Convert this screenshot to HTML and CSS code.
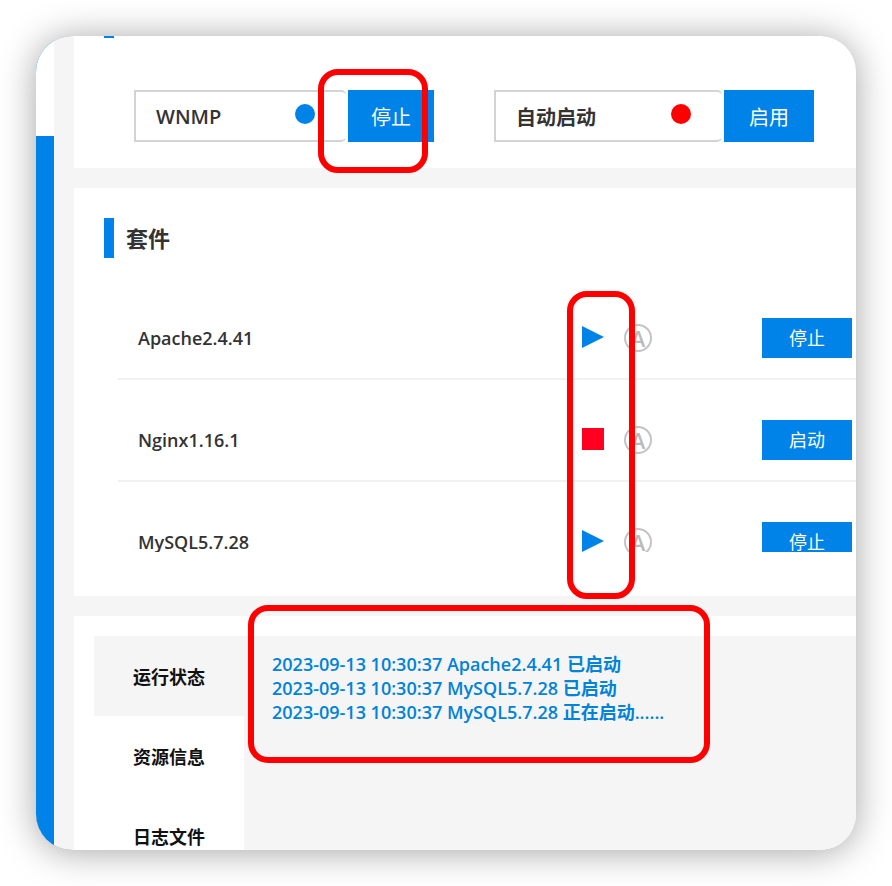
FILE: index.html
```html
<!DOCTYPE html>
<html lang="zh-CN">
<head>
<meta charset="utf-8">
<title>WNMP</title>
<meta name="viewport" content="width=device-width, initial-scale=1">
<link rel="stylesheet" href="styles.css">
</head>
<body>
<div class="window">
  <aside class="rail"></aside>
  <main class="main">
    <section class="panel switches">
      <div class="marker-tail"></div>
      <div class="switch-row">
        <div class="switch">
          <div class="field"><span>WNMP</span><i class="dot on"></i></div>
          <button type="button" class="btn">停止</button>
        </div>
        <div class="switch wide">
          <div class="field"><span>自动启动</span><i class="dot off"></i></div>
          <button type="button" class="btn">启用</button>
        </div>
      </div>
    </section>

    <section class="panel suite">
      <h2 class="heading">套件</h2>
      <div class="list">
        <table class="services">
          <tbody>
            <tr>
              <td class="name">Apache2.4.41</td>
              <td class="state"><div class="icons"><svg class="mark" viewBox="0 0 22 22"><path d="M0 0L22 11L0 22Z" fill="#0083e8"/></svg><span class="auto">A</span></div></td>
              <td class="action"><button type="button" class="btn small">停止</button></td>
            </tr>
            <tr>
              <td class="name">Nginx1.16.1</td>
              <td class="state"><div class="icons"><svg class="mark" viewBox="0 0 22 22"><path d="M0 0H22V22H0Z" fill="#ff0020"/></svg><span class="auto">A</span></div></td>
              <td class="action"><button type="button" class="btn small">启动</button></td>
            </tr>
            <tr>
              <td class="name">MySQL5.7.28</td>
              <td class="state"><div class="icons"><svg class="mark" viewBox="0 0 22 22"><path d="M0 0L22 11L0 22Z" fill="#0083e8"/></svg><span class="auto">A</span></div></td>
              <td class="action"><button type="button" class="btn small">停止</button></td>
            </tr>
          </tbody>
        </table>
      </div>
    </section>

    <section class="panel status">
      <nav class="tabs">
        <button type="button" class="tab active">运行状态</button>
        <button type="button" class="tab">资源信息</button>
        <button type="button" class="tab">日志文件</button>
      </nav>
      <div class="log">
        <p>2023-09-13 10:30:37 Apache2.4.41 已启动</p>
        <p>2023-09-13 10:30:37 MySQL5.7.28 已启动</p>
        <p>2023-09-13 10:30:37 MySQL5.7.28 正在启动......</p>
      </div>
    </section>
  </main>
  <div class="callout callout-stop"></div>
  <div class="callout callout-state"></div>
  <div class="callout callout-log"></div>
</div>
</body>
</html>
```
FILE: styles.css
```css
* { box-sizing: border-box; }

body {
  margin: 0;
  padding: 36px;
  height: 100vh;
  background: #fff;
  color: #333;
  font-family: "Open Sans", "Noto Sans CJK SC", sans-serif;
  font-size: 18px;
  font-weight: 600;
}

button {
  border: 0;
  padding: 0;
  font: inherit;
}

.window {
  position: relative;
  display: flex;
  gap: 20px;
  height: 100%;
  overflow: hidden;
  border-radius: 36px;
  background: #f5f5f5;
}

body::before {
  content: "";
  position: absolute;
  inset: 36px;
  border-radius: 36px;
  background: #999;
  box-shadow: 0 2px 36px rgba(0, 0, 0, 0.36);
}

.rail {
  flex: 0 0 18px;
  background: #0083e8;
  border-top: 100px solid #fff;
}

.main {
  flex: 1;
  min-width: 0;
  display: flex;
  flex-direction: column;
  gap: 20px;
}

.panel { background: #fff; flex: none; }

.switches { padding: 0 30px 26px; }

.marker-tail {
  width: 10px;
  height: 2px;
  background: #0083e8;
}

.switch-row {
  display: flex;
  gap: 60px;
  padding: 52px 0 0 30px;
}

.switch {
  display: flex;
  gap: 2px;
  width: 300px;
  height: 52px;
  font-size: 20px;
}

.switch.wide { width: 320px; }

.field {
  flex: 1;
  display: flex;
  align-items: center;
  justify-content: space-between;
  padding: 0 31px 0 20px;
  border: 2px solid #d3d3d3;
  border-right: 0;
  border-radius: 0 5px 5px 0;
}

.dot {
  width: 20px;
  height: 20px;
  margin-bottom: 4px;
  border-radius: 50%;
}

.dot.on { background: #0083e8; }
.dot.off { background: #f00; }

.btn {
  width: 86px;
  background: #0083e8;
  color: #fff;
  font-weight: 400;
}

.wide .btn { width: 90px; }

.btn.small {
  display: block;
  width: 90px;
  height: 40px;
}

.suite { padding: 30px 0 44px 30px; }

.heading {
  margin: 0 0 20px;
  padding-left: 12px;
  border-left: 10px solid #0083e8;
  font-size: 22px;
  font-weight: 600;
  line-height: 40px;
}

.list {
  max-height: 274px;
  margin-left: 14px;
  overflow: hidden;
}

.services {
  width: 100%;
  border-spacing: 0;
}

.services td {
  padding: 40px 0 20px;
  border-bottom: 2px solid #f1f1f1;
  line-height: 40px;
}

.services .name { padding-left: 20px; }
.services .state { width: 180px; }
.services .action { width: 94px; }

.icons {
  display: flex;
  align-items: center;
  gap: 20px;
  height: 40px;
}

.mark {
  width: 22px;
  height: 22px;
  margin-bottom: 2px;
}

.auto {
  width: 28px;
  height: 28px;
  border: 2px solid #c4c4c4;
  border-radius: 50%;
  color: #bbb;
  font-size: 22px;
  line-height: 24px;
  text-align: center;
}

.status {
  flex: 1 0 0;
  min-height: 0;
  display: flex;
  padding: 20px 0 0 20px;
  overflow: hidden;
}

.tabs {
  flex: 0 0 150px;
  display: flex;
  flex-direction: column;
}

.tab {
  flex: 0 0 80px;
  background: #fff;
  color: #111;
}

.tab.active { background: #f5f5f5; }

.log {
  flex: 1;
  padding: 16px 28px;
  background: #f5f5f5;
  color: #0083d8;
  line-height: 24px;
}

.log p { margin: 0; }

.callout {
  position: absolute;
  border: 6px solid #f00;
  border-radius: 20px;
}

.callout-stop { left: 282px; top: 33px; width: 110px; height: 104px; }
.callout-state { left: 531px; top: 255px; width: 68px; height: 308px; }
.callout-log { left: 212px; top: 569px; width: 462px; height: 158px; }
```
